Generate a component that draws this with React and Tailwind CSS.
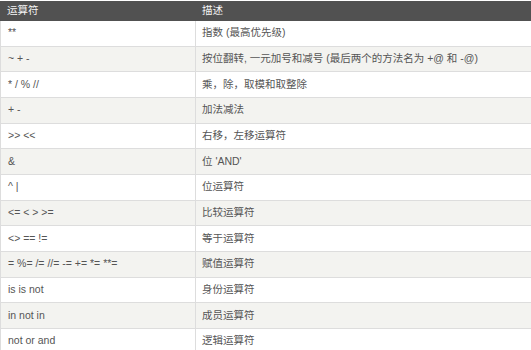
import React from "react";

const rows = [
  ["**", "指数 (最高优先级)"],
  ["~ + -", "按位翻转, 一元加号和减号 (最后两个的方法名为 +@ 和 -@)"],
  ["* / % //", "乘，除，取模和取整除"],
  ["+ -", "加法减法"],
  [">> <<", "右移，左移运算符"],
  ["&", "位 'AND'"],
  ["^ |", "位运算符"],
  ["<= < > >=", "比较运算符"],
  ["<> == !=", "等于运算符"],
  ["= %= /= //= -= += *= **=", "赋值运算符"],
  ["is is not", "身份运算符"],
  ["in not in", "成员运算符"],
  ["not or and", "逻辑运算符"],
];

export default function App() {
  return (
    <div
      className="w-[531px] h-[350px] overflow-hidden bg-white text-[10.5px] text-[#555555]"
      style={{ fontFamily: '"Liberation Sans", "Noto Sans CJK SC", sans-serif' }}
    >
      <div className="grid grid-cols-[195px_1fr] h-[20px] bg-[#515151] text-[#f4f4f4] mt-px">
        <div className="px-[7px] flex items-center">运算符</div>
        <div className="px-[7px] flex items-center">描述</div>
      </div>
      {rows.map(([op, desc], i) => (
        <div
          key={i}
          className={
            "grid grid-cols-[195px_1fr] h-[25.67px] border-b border-[#dddddd] border-l " +
            (i % 2 === 0 ? "bg-white" : "bg-[#f3f3f0]")
          }
        >
          <div className="px-[7px] flex items-center border-r border-[#dddddd] whitespace-pre">{op}</div>
          <div className="px-[6px] flex items-center whitespace-pre">{desc}</div>
        </div>
      ))}
    </div>
  );
}
